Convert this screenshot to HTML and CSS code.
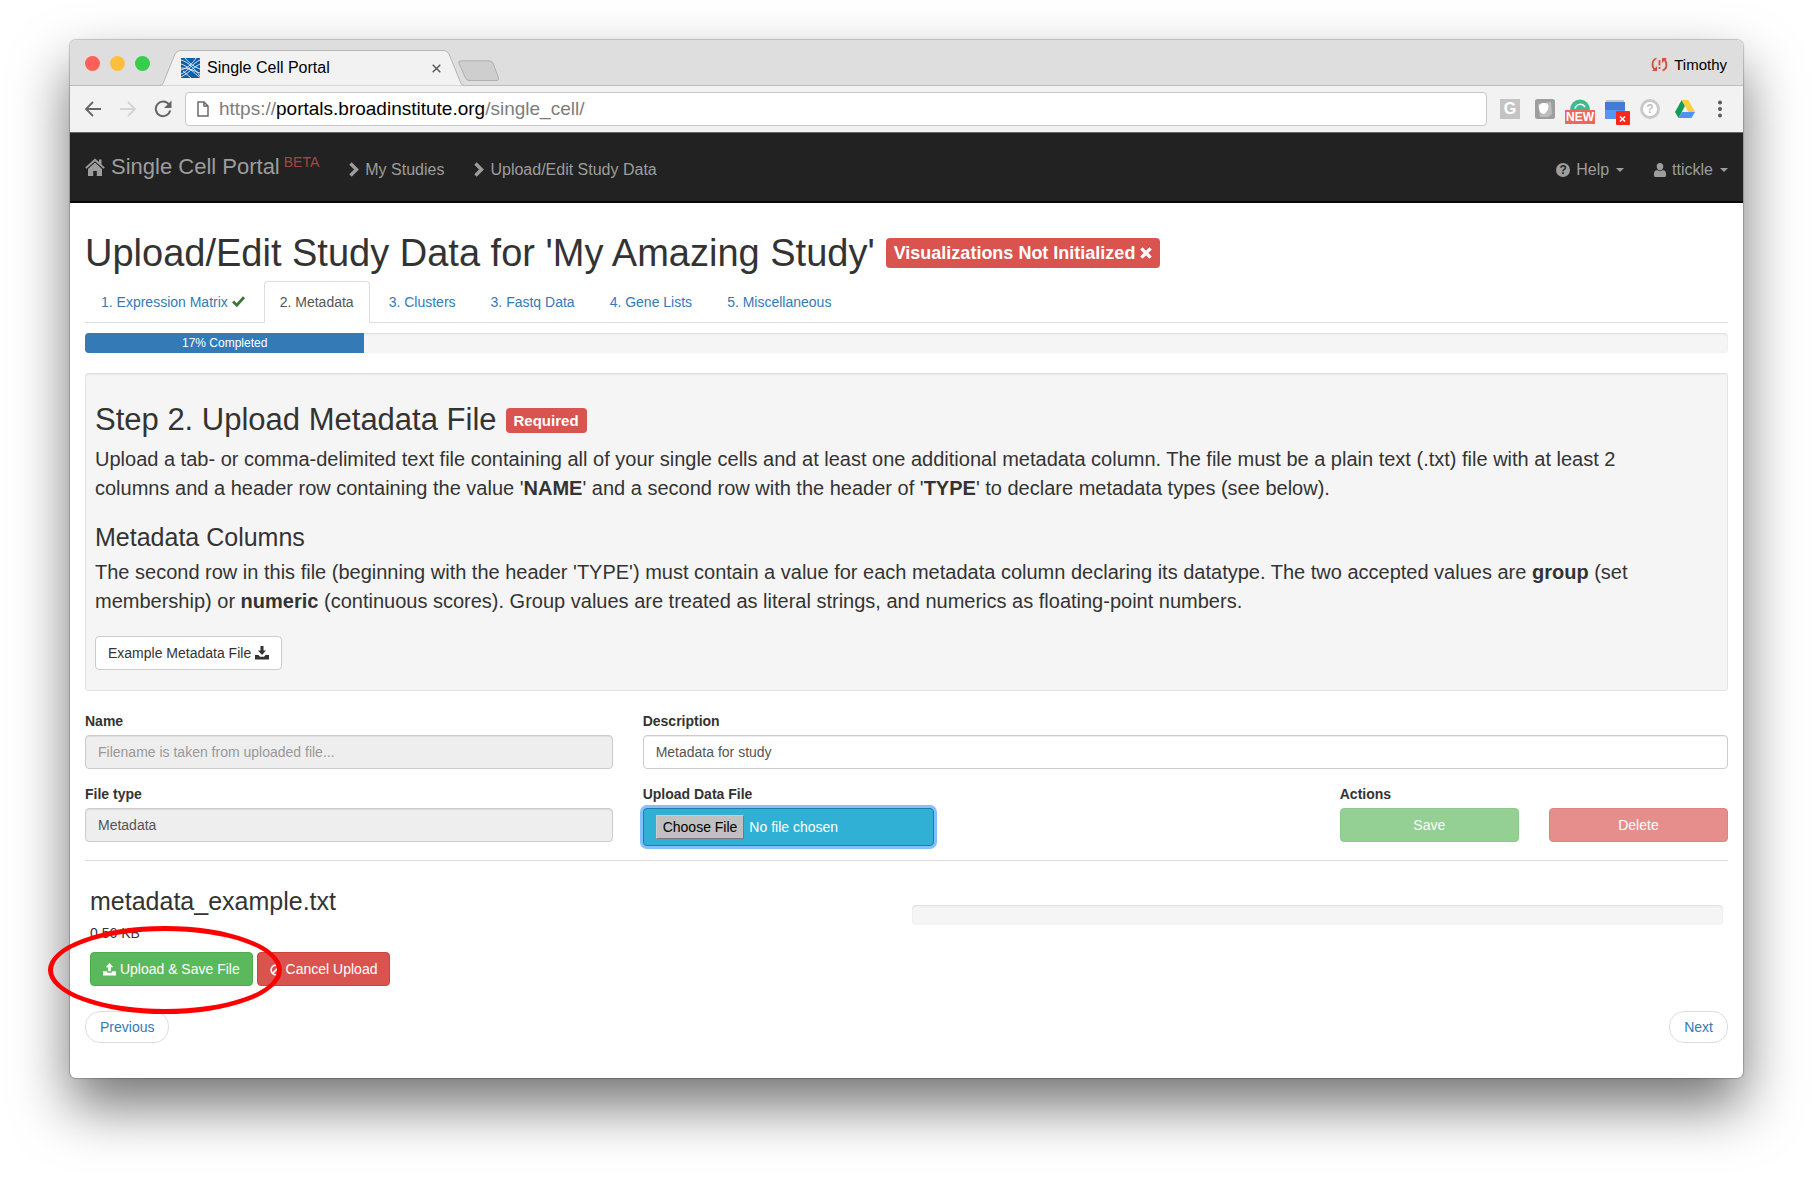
FILE: index.html
```html
<!DOCTYPE html>
<html lang="en">
<head>
<meta charset="utf-8">
<title>Single Cell Portal</title>
<link rel="stylesheet" href="styles.css">
</head>
<body>
<div class="window">
  <header class="tabstrip">
    <div class="lights"><span class="light red"></span><span class="light yellow"></span><span class="light green"></span></div>
    <div class="browser-tab">
      <svg class="tab-shape" viewBox="0 0 304 36" preserveAspectRatio="none" aria-hidden="true"><path d="M0 35.5C3 35 3 33 4 31L15 4Q17 .5 20 .5H284Q287 .5 289 4L300 31C301 33 301 35 304 35.5" fill="#f2f2f2" stroke="#b5b5b5"/></svg>
      <svg class="favicon" viewBox="0 0 19 20" aria-hidden="true"><path fill="#0f5fa6" d="M0 0h19v20H0z"/><path d="M0 2C8 4 14 12 19 18M0 6C7 8 13 15 19 19.500M0 16C6 14 12 5 19 2M0 12C7 10 12 5 15 0M0 10C8 10 13 13 19 15M4 0C8 5 13 9 19 11M0 19C7 16 12 9 19 6M2 13L10 20" stroke="#fff" stroke-width=".8" fill="none"/></svg>
      <span class="tab-title">Single Cell Portal</span>
      <button class="tab-close" aria-label="Close tab"><svg width="9" height="9" viewBox="0 0 9 9"><path d="M.7.7l7.6 7.6M8.300.7L.7 8.300" stroke="#5a5a5a" stroke-width="1.500"/></svg></button>
    </div>
    <button class="new-tab" aria-label="New tab"><svg width="44" height="22" viewBox="0 0 44 22"><path d="M4 .8H32Q35 .8 36 3L41.500 18Q42 20.500 40 20.500H12Q9.500 20.500 8.500 18L1.800 3Q1 .8 4 .8Z" fill="#cecece" stroke="#b0b0b0"/></svg></button>
    <div class="profile">
      <svg width="17" height="15" viewBox="0 0 17 15" aria-hidden="true"><g fill="none" stroke="#d3503d" stroke-width="1.800"><path d="M5.500 1.500C.5 3 .5 10 4 12.500M11.500 13.500C16.500 12 16.500 5 13 2.500"/><path d="M8.500 3v5.500M8.500 10v2"/></g><path fill="#d3503d" d="M1 14h5V9zM16 1h-5v5z"/></svg>
      <span>Timothy</span>
    </div>
  </header>

  <div class="toolbar">
    <div class="nav-buttons">
      <button aria-label="Back"><svg width="18" height="18" viewBox="0 0 18 18"><path d="M17 9H2M9 2L2 9 9 16" fill="none" stroke="#666" stroke-width="1.800"/></svg></button>
      <button aria-label="Forward"><svg width="18" height="18" viewBox="0 0 18 18"><path d="M1 9h15M9 2L16 9 9 16" fill="none" stroke="#d4d4d4" stroke-width="1.800"/></svg></button>
      <button aria-label="Reload"><svg width="18" height="18" viewBox="0 0 18 18"><path d="M15 4.500A7.300 7.300 0 1 0 16.200 10.500" fill="none" stroke="#666" stroke-width="2"/><path fill="#666" d="M17.500.5V8H10z"/></svg></button>
    </div>
    <div class="omnibox">
      <svg width="12" height="16" viewBox="0 0 12 16" aria-hidden="true"><path d="M1 1h6l4 4v10H1zM7 1v4h4" fill="none" stroke="#6a6a6a" stroke-width="1.500"/></svg>
      <span class="url">https://<b>portals.broadinstitute.org</b>/single_cell/</span>
    </div>
    <div class="extensions">
      <span class="ext ext-g">G</span>
      <svg class="ext" viewBox="0 0 20 20" aria-hidden="true"><rect width="20" height="20" rx="2.500" fill="#9e9e9e"/><path fill="#bdbdbd" d="M3 5l13-2 1 12-4 3H5z"/><path d="M4 8.500C3.500 4.500 8 3 12.500 4.500 15 9 12 13 9 15 5.500 14.500 4.300 12 4 8.500Z" fill="#fff"/></svg>
      <span class="ext-new"><svg width="20" height="11" viewBox="0 0 20 11" aria-hidden="true"><path d="M0 11a10 10.500 0 0 1 20 0z" fill="#3dbd8b"/><path d="M5 9.500C6.500 4.500 12.500 4 15 8" fill="none" stroke="#fff" stroke-width="1.500"/></svg><span class="new-badge">NEW</span></span>
      <svg class="ext-cal" width="25" height="26" viewBox="0 0 25 26" aria-hidden="true"><path d="M0 3h20v17H0z" fill="#5297f1"/><path d="M0 3h20v8H0z" fill="#437ad6"/><path d="M1 1h18v2H1z" fill="#c4c4c4"/><rect x="11" y="12" width="14" height="14" rx="1" fill="#ff281c"/><path d="M15 17.500l5 5M20 17.500l-5 5" stroke="#fff" stroke-width="1.600"/></svg>
      <span class="ext ext-help">?</span>
      <svg width="20" height="18" viewBox="0 0 20 18" aria-hidden="true"><path fill="#0f9d58" d="M6.700 0L10 6 3.500 18 0 12z"/><path fill="#ffcd40" d="M6.700 0h6.600L20 12h-6.700z"/><path fill="#4f93f0" d="M6.800 12H20l-3.500 6h-13z"/></svg>
      <button class="menu-dots" aria-label="Menu"><svg width="4" height="18" viewBox="0 0 4 18"><g fill="#5a5a5a"><circle cx="2" cy="2.500" r="2"/><circle cx="2" cy="9" r="2"/><circle cx="2" cy="15.500" r="2"/></g></svg></button>
    </div>
  </div>

  <nav class="navbar">
    <a class="brand" href="#"><svg width="20" height="18" viewBox="0 0 20 18" aria-hidden="true"><path fill="currentColor" d="M10 .5L.2 9.400l1.300 1.400L10 3.200l8.500 7.600 1.300-1.400-3.300-3V1.500H14v2.600z"/><path fill="currentColor" d="M10 4.600L3 11v7h5.200v-5h3.600v5H17v-7z"/></svg><span>Single Cell Portal</span><sup>BETA</sup></a>
    <a class="nav-link" href="#"><svg width="10" height="15" viewBox="0 0 10 15" aria-hidden="true"><path d="M1.500 1.500l6 6-6 6" fill="none" stroke="currentColor" stroke-width="3.400"/></svg>My Studies</a>
    <a class="nav-link" href="#"><svg width="10" height="15" viewBox="0 0 10 15" aria-hidden="true"><path d="M1.500 1.500l6 6-6 6" fill="none" stroke="currentColor" stroke-width="3.400"/></svg>Upload/Edit Study Data</a>
    <div class="nav-right">
      <a class="nav-link" href="#"><span class="q-icon">?</span>Help<span class="caret"></span></a>
      <a class="nav-link" href="#"><svg width="12" height="14" viewBox="0 0 12 14" aria-hidden="true"><path fill="currentColor" d="M6 0C8.200 0 9.300 1.500 9.300 3.500 9.300 5.500 8 7.500 6 7.500S2.700 5.500 2.700 3.500C2.700 1.500 3.800 0 6 0ZM3 7C4.500 8.500 7.500 8.500 9 7c2 .3 3 1.500 3 3.800v1.700q0 1.500-1.500 1.500h-9Q0 14 0 12.500V10.800C0 8.500 1 7.300 3 7Z"/></svg>ttickle<span class="caret"></span></a>
    </div>
  </nav>

  <main class="content">
    <div class="title-row">
      <h1>Upload/Edit Study Data for 'My Amazing Study'</h1>
      <span class="badge badge-lg">Visualizations Not Initialized <svg width="12" height="12" viewBox="0 0 13 13" aria-hidden="true"><path d="M1.500 1.500l10 10M11.500 1.500l-10 10" stroke="#fff" stroke-width="3.600"/></svg></span>
    </div>

    <div class="tabs">
      <a href="#">1. Expression Matrix <svg width="13" height="11" viewBox="0 0 13 11" aria-hidden="true"><path d="M1 5.500l3.800 3.700L12 1.200" fill="none" stroke="#3c763d" stroke-width="2.800"/></svg></a>
      <a href="#" class="active">2. Metadata</a>
      <a href="#">3. Clusters</a>
      <a href="#">3. Fastq Data</a>
      <a href="#">4. Gene Lists</a>
      <a href="#">5. Miscellaneous</a>
    </div>

    <div class="progress"><div class="progress-bar" style="width:17%">17% Completed</div></div>

    <section class="well">
      <div class="step-row"><h2>Step 2. Upload Metadata File</h2><span class="badge">Required</span></div>
      <p>Upload a tab- or comma-delimited text file containing all of your single cells and at least one additional metadata column. The file must be a plain text (.txt) file with at least 2 columns and a header row containing the value '<b>NAME</b>' and a second row with the header of '<b>TYPE</b>' to declare metadata types (see below).</p>
      <h3>Metadata Columns</h3>
      <p>The second row in this file (beginning with the header 'TYPE') must contain a value for each metadata column declaring its datatype. The two accepted values are <b>group</b> (set membership) or <b>numeric</b> (continuous scores). Group values are treated as literal strings, and numerics as floating-point numbers.</p>
      <button class="btn btn-default">Example Metadata File <svg width="14" height="14" viewBox="0 0 14 14" aria-hidden="true"><path fill="currentColor" d="M5.500 0h3v4.500H11L7 9 3 4.500h2.500zM0 9h3.500L5 10.700h4L10.500 9H14v4.500H0z"/></svg></button>
    </section>

    <form class="form-grid">
      <div class="field span-4"><label for="name">Name</label><input id="name" type="text" placeholder="Filename is taken from uploaded file..." readonly></div>
      <div class="field span-8"><label for="desc">Description</label><input id="desc" type="text" value="Metadata for study"></div>
      <div class="field span-4"><label for="ftype">File type</label><input id="ftype" type="text" value="Metadata" readonly></div>
      <div class="field span-5"><label for="file">Upload Data File</label><input id="file" class="file-input" type="file"></div>
      <div class="field span-3"><span class="label">Actions</span>
        <div class="actions"><button type="button" class="btn btn-success" disabled>Save</button><button type="button" class="btn btn-danger" disabled>Delete</button></div>
      </div>
    </form>

    <section class="upload">
      <div>
        <h3>metadata_example.txt</h3>
        <div class="size">0.56 KB</div>
        <div class="upload-buttons">
          <button class="btn btn-success"><svg width="13" height="13" viewBox="0 0 14 14" aria-hidden="true"><path fill="currentColor" d="M7 0l4 4.500H8.500V9h-3V4.500H3zM0 9h4.500v1.500h5V9H14v4.500H0z"/></svg> Upload &amp; Save File</button>
          <button class="btn btn-danger"><svg width="12" height="12" viewBox="0 0 13 13" aria-hidden="true"><g fill="none" stroke="currentColor" stroke-width="1.800"><circle cx="6.500" cy="6.500" r="5.300"/><path d="M2.800 10.200l7.400-7.400"/></g></svg> Cancel Upload</button>
          <span class="marker"></span>
        </div>
      </div>
      <div class="progress"></div>
    </section>

    <div class="pager"><a href="#">Previous</a><a href="#">Next</a></div>
  </main>
</div>
</body>
</html>
```
FILE: styles.css
```css
* { box-sizing: border-box; }
body {
  margin: 0;
  padding: 40px 70px 100px;
  background: #fff;
  color: #333;
  font: 14px/20px "Liberation Sans", Arial, sans-serif;
}
h1, h2, h3, p { margin: 0; font-weight: 400; }
button { font: inherit; cursor: pointer; }
a { color: #337ab7; text-decoration: none; }
svg { flex: none; }

.window {
  border-radius: 6px;
  background: #fff;
  box-shadow: 0 0 1px 1px rgba(0, 0, 0, .2), 0 28px 56px rgba(0, 0, 0, .55);
}

/* Browser frame */
.tabstrip {
  display: flex;
  height: 46px;
  padding: 0 16px 0 15px;
  border-radius: 6px 6px 0 0;
  border-bottom: 1px solid #bdbdbd;
  background: #dedede;
  color: #000;
  font-size: 15px;
}
.lights { display: flex; gap: 10px; padding-top: 16px; margin-right: 10px; }
.light { width: 15px; height: 15px; border-radius: 50%; }
.red { background: #ff6058; }
.yellow { background: #ffbf3e; }
.green { background: #35cd4b; }
.browser-tab {
  position: relative;
  display: flex;
  align-items: center;
  width: 304px;
  height: 36px;
  margin-top: 10px;
  padding: 0 23px 0 21px;
}
.tab-shape { position: absolute; inset: 0; width: 100%; height: 100%; }
.favicon { position: relative; width: 19px; height: 20px; margin-right: 7px; }
.tab-title { position: relative; flex: 1; font-size: 16px; }
.tab-close, .new-tab, .nav-buttons button, .menu-dots { display: flex; padding: 0; border: 0; background: none; }
.tab-close { position: relative; }
.new-tab { align-self: flex-start; margin: 20px 0 0 -7px; }
.profile { display: flex; align-items: center; gap: 6px; margin-left: auto; padding-top: 4px; }

.toolbar {
  display: flex;
  align-items: center;
  gap: 13px;
  height: 46px;
  padding: 0 21px 0 14px;
  background: #f2f2f2;
}
.nav-buttons { display: flex; gap: 17px; }
.omnibox {
  flex: 1;
  display: flex;
  align-items: center;
  gap: 10px;
  height: 34px;
  padding: 0 11px;
  border: 1px solid #c8c8c8;
  border-radius: 4px;
  background: #fff;
}
.url { color: #7d7d7d; font-size: 19px; }
.url b { color: #000; font-weight: 400; }
.extensions { display: flex; align-items: center; gap: 15px; }
.ext { width: 20px; height: 20px; flex: none; text-align: center; line-height: 20px; }
.ext-g { background: #c4c4c4; color: #fff; font-size: 16px; font-weight: 700; }
.ext-new { display: flex; flex-direction: column; align-items: center; width: 30px; margin: 4px -5px 0; }
.new-badge { width: 30px; height: 14px; background: #ef675c; color: #fff; font-size: 12px; font-weight: 700; line-height: 14px; text-align: center; }
.ext-cal { margin: 5px -5px 0 0; }
.ext-help { border: 3px solid #c9c9c9; border-radius: 50%; color: #c0c0c0; background: #fff; font-size: 12px; font-weight: 700; line-height: 14px; }
.menu-dots { margin-left: 8px; }

/* Site header */
.navbar {
  display: flex;
  align-items: center;
  gap: 30px;
  height: 71px;
  padding: 0 15px;
  border-top: 1px solid #666;
  border-bottom: 2px solid #080808;
  background: #222;
}
.navbar a { display: flex; align-items: center; color: #9d9d9d; font-size: 16px; }
.navbar .brand { gap: 6px; font-size: 22px; }
.brand sup { align-self: flex-start; margin-left: -2px; color: #a94442; font-size: 14px; line-height: 10px; }
.navbar .nav-link { gap: 6px; padding-top: 5px; }
.nav-right { display: flex; gap: 30px; margin-left: auto; }
.nav-right .caret { margin-left: 1px; }
.q-icon { width: 14px; height: 14px; border-radius: 50%; background: #9d9d9d; color: #222; font-size: 12px; font-weight: 700; line-height: 14px; text-align: center; }
.caret { border: 4px solid transparent; border-top-color: currentColor; border-bottom: 0; }

/* Page */
.content { padding: 30px 15px 35px; }
.title-row { display: flex; align-items: center; gap: 11px; }
h1 { font-size: 38px; line-height: 40px; }
.badge { padding: 0 8px; border-radius: 4px; background: #d9534f; color: #fff; font-size: 15px; font-weight: 700; line-height: 25px; }
.badge-lg { font-size: 18px; line-height: 30px; }

.tabs { display: flex; gap: 3px; margin-top: 8px; border-bottom: 1px solid #ddd; }
.tabs a { margin-bottom: -1px; padding: 10px 15px; border: 1px solid transparent; border-radius: 4px 4px 0 0; }
.tabs .active { border-color: #ddd; border-bottom-color: #fff; background: #fff; color: #555; }

.progress { height: 20px; overflow: hidden; border-radius: 4px; background: #f5f5f5; box-shadow: inset 0 1px 2px rgba(0, 0, 0, .1); }
.progress-bar { height: 100%; background: #337ab7; color: #fff; font-size: 12px; text-align: center; }
.tabs + .progress { margin-top: 10px; }

.well { margin-top: 20px; padding: 29px 9px 20px; border: 1px solid #e3e3e3; border-radius: 3px; background: #f5f5f5; box-shadow: inset 0 1px 1px rgba(0, 0, 0, .05); }
.step-row { display: flex; align-items: center; gap: 9px; }
h2 { font-size: 31px; line-height: 34px; }
.well p { margin-top: 8px; padding-right: 40px; font-size: 20px; line-height: 29px; }
h3 { font-size: 25px; line-height: 26px; }
.well h3 { margin-top: 21px; }
.well .btn { margin-top: 20px; }

.btn { height: 34px; padding: 0 12px; border: 1px solid transparent; border-radius: 4px; color: #fff; white-space: nowrap; }
.btn svg { vertical-align: -2px; }
.btn-default { border-color: #ccc; background: #fff; color: #333; }
.btn-success { border-color: #4cae4c; background: #5cb85c; }
.btn-danger { border-color: #d43f3a; background: #d9534f; }
.btn:disabled { opacity: .65; }

.form-grid { display: grid; grid-template-columns: repeat(12, 1fr); gap: 15px 30px; margin-top: 20px; padding-bottom: 14px; border-bottom: 1px solid #ddd; }
.span-3 { grid-column: span 3; }
.span-4 { grid-column: span 4; }
.span-5 { grid-column: span 5; }
.span-8 { grid-column: span 8; }
.field label, .label { display: block; margin-bottom: 4px; font-weight: 700; }
.field input { display: block; width: 100%; height: 34px; padding: 6px 12px; border: 1px solid #ccc; border-radius: 4px; background: #fff; box-shadow: inset 0 1px 1px rgba(0, 0, 0, .075); color: #555; font: inherit; }
.field input[readonly] { background: #eee; }
.field input::placeholder { color: #999; }
.field .file-input { width: 291px; height: 38px; border-color: #1b7fa8; background: #31b0d5; color: #fff; box-shadow: 0 0 0 3px #85bfff; }
.file-input::file-selector-button { height: 24px; margin: 0 5px 0 0; padding: 1px 6px; border: 1px outset #ccc; background: #c0c0c0; color: #000; font: inherit; }
.actions { display: grid; grid-template-columns: 1fr 1fr; gap: 30px; }

.upload { display: grid; grid-template-columns: 1fr 1fr; gap: 10px; padding: 27px 5px 0; }
.upload .progress { margin-top: 17px; }
.size { margin-top: 9px; }
.upload-buttons { position: relative; display: flex; gap: 4px; margin-top: 9px; }
/* Callout round the upload button */
.marker { position: absolute; left: -42px; top: -26px; width: 234px; height: 88px; border: 5px solid #f00; border-radius: 50%; pointer-events: none; }

.pager { display: flex; justify-content: space-between; margin-top: 25px; }
.pager a { padding: 5px 14px; border: 1px solid #ddd; border-radius: 15px; }
```
